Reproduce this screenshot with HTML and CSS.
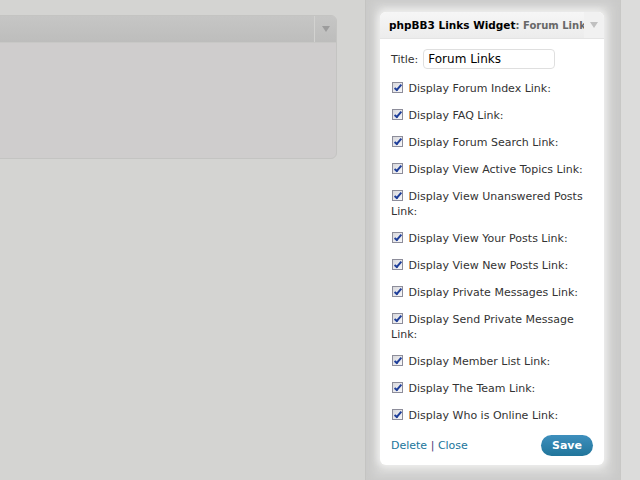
FILE: index.html
```html
<!DOCTYPE html>
<html>
<head>
  <title>Widgets</title>
  <link rel="stylesheet" href="styles.css">
</head>
<body>
  <div class="page">
    <div class="main">
      <div class="box">
        <div class="box-head">
          <span class="box-toggle"><span class="arrow dim"></span></span>
        </div>
        <div class="box-body"></div>
      </div>
    </div>

    <div class="sidebar">
      <div class="widget">
        <div class="widget-top">
          <div class="widget-title">phpBB3 Links Widget<span class="in-title">: Forum Links</span></div>
          <span class="widget-toggle"><span class="arrow"></span></span>
        </div>
        <div class="widget-inside">
          <p class="title-row">
            <label for="title">Title:</label>
            <input type="text" id="title" value="Forum Links">
          </p>
          <p><label><input type="checkbox" checked> Display Forum Index Link:</label></p>
          <p><label><input type="checkbox" checked> Display FAQ Link:</label></p>
          <p><label><input type="checkbox" checked> Display Forum Search Link:</label></p>
          <p><label><input type="checkbox" checked> Display View Active Topics Link:</label></p>
          <p><label><input type="checkbox" checked> Display View Unanswered Posts Link:</label></p>
          <p><label><input type="checkbox" checked> Display View Your Posts Link:</label></p>
          <p><label><input type="checkbox" checked> Display View New Posts Link:</label></p>
          <p><label><input type="checkbox" checked> Display Private Messages Link:</label></p>
          <p><label><input type="checkbox" checked> Display Send Private Message Link:</label></p>
          <p><label><input type="checkbox" checked> Display Member List Link:</label></p>
          <p><label><input type="checkbox" checked> Display The Team Link:</label></p>
          <p><label><input type="checkbox" checked> Display Who is Online Link:</label></p>
          <div class="widget-control">
            <div class="actions"><a href="#">Delete</a> <span class="sep">|</span> <a href="#">Close</a></div>
            <button type="button" class="save">Save</button>
          </div>
        </div>
      </div>
    </div>
    <div class="edge"></div>
  </div>
</body>
</html>
```

FILE: styles.css
```css
body {
  margin: 0;
  font-family: "DejaVu Sans", Verdana, sans-serif;
  font-size: 11px;
  background-color: #d4d4d2;
  color: #333;
}

.page {
  display: flex;
  height: 480px;
  overflow: hidden;
}

.main {
  width: 365px;
  padding-top: 15px;
}

.box {
  margin-left: -10px;
  width: 345px;
  height: 142px;
  border: 1px solid #c4c4c2;
  border-radius: 0 6px 6px 0;
  background-color: #cfcdcd;
  overflow: hidden;
}

.box-head {
  height: 26px;
  background: linear-gradient(#c6c6c5, #bdbdbc);
  border-bottom: 1px solid #c8c8c6;
  display: flex;
  justify-content: flex-end;
}

.box-toggle {
  width: 21px;
  border-left: 1px solid #d2d2d0;
  display: flex;
  align-items: center;
  justify-content: center;
}

.arrow {
  width: 0;
  height: 0;
  border-left: 4px solid transparent;
  border-right: 4px solid transparent;
  border-top: 6px solid #c0c0c0;
}

.arrow.dim {
  border-top-color: #9c9c9c;
}

.sidebar {
  width: 256px;
  border-left: 1px solid #c4c4c2;
  border-right: 1px solid #c8c8c6;
  background-color: #d6d6d5;
  box-shadow: inset 8px 0 10px #cacac9, inset -8px 0 10px #cacac9;
  padding: 12px 0 0 14px;
  box-sizing: border-box;
}

.edge {
  flex: 1;
  background-color: #dcdcdb;
}

.widget {
  width: 224px;
  background-color: #fff;
  border-radius: 6px;
  box-shadow: 0 0 6px 3px #efefee;
  overflow: hidden;
}

.widget-top {
  height: 26px;
  display: flex;
  align-items: center;
  background: linear-gradient(#f6f6f6, #ececec);
  border-bottom: 1px solid #e4e4e4;
}

.widget-title {
  flex: 1;
  padding-left: 9px;
  font-weight: bold;
  font-size: 10.5px;
  color: #000;
  white-space: nowrap;
  overflow: hidden;
}

.in-title {
  color: #686868;
  font-size: 10px;
}

.widget-toggle {
  width: 20px;
  height: 100%;
  display: flex;
  align-items: center;
  justify-content: center;
  background-color: #f1f1f1;
}

.widget-inside {
  padding: 10px 11px 9px 11px;
}

.widget-inside p {
  margin: 0 0 12px 0;
  line-height: 15px;
}

.title-row {
  display: flex;
  align-items: center;
  gap: 5px;
}

input[type="text"] {
  width: 122px;
  height: 18px;
  padding: 0 4px;
  border: 1px solid #dfdfdf;
  border-radius: 4px;
  font-family: "DejaVu Sans", Verdana, sans-serif;
  font-size: 12px;
  color: #000;
}

input[type="checkbox"] {
  appearance: none;
  position: relative;
  width: 11px;
  height: 11px;
  margin: 0 2px 0 1px;
  vertical-align: -1px;
  border: 1px solid #8d8d9a;
  background: linear-gradient(135deg, #d8d8dc, #f8f8fa);
  box-sizing: border-box;
}

input[type="checkbox"]:checked::after {
  content: "";
  position: absolute;
  left: 3px;
  top: 0px;
  width: 2px;
  height: 6px;
  border-right: 2px solid #1f3f9a;
  border-bottom: 2px solid #1f3f9a;
  transform: rotate(40deg);
}

.widget-control {
  display: flex;
  justify-content: space-between;
  align-items: center;
  margin-top: 12px;
}

.actions a {
  color: #21759b;
  text-decoration: none;
}

.sep {
  color: #4a3a7a;
}

.save {
  background: linear-gradient(#3e8fbd, #21759b);
  color: white;
  border: none;
  font-family: "DejaVu Sans", Verdana, sans-serif;
  font-weight: bold;
  font-size: 11px;
  padding: 4px 11px;
  border-radius: 11px;
  cursor: pointer;
}
```
